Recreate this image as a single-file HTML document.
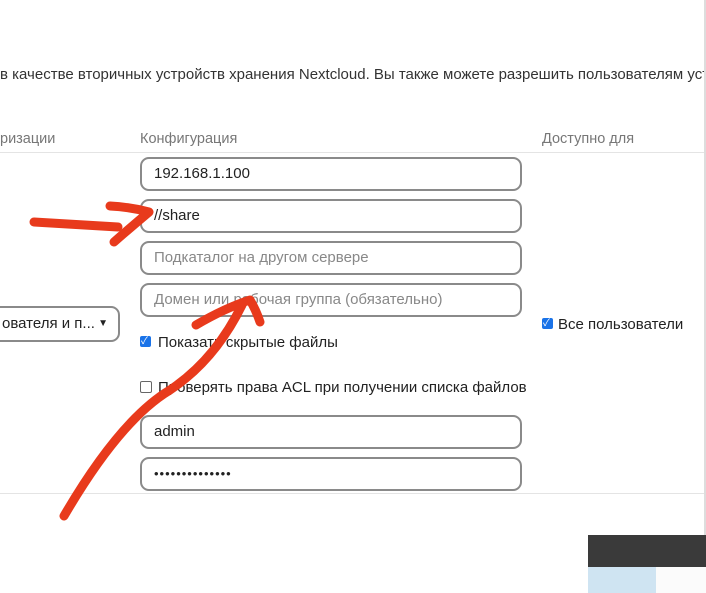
<!DOCTYPE html><html><head><meta charset="utf-8"><style>
body{margin:0;width:706px;height:593px;background:#fff;position:relative;overflow:hidden;font-family:"Liberation Sans","Noto Sans CJK SC",sans-serif;color:#222}
.t{position:absolute;white-space:nowrap}
.in{position:absolute;left:140px;height:30px;border:2px solid #8a8a8a;border-radius:9px;font-size:15px;line-height:30px;padding-left:12px;box-sizing:content-box;width:366px}
.ph{color:#888}
.cb{position:absolute;width:11px;height:11px;border-radius:2px}
</style></head><body>
<div class="t" style="left:0;top:66px;font-size:15px;color:#333">в качестве вторичных устройств хранения Nextcloud. Вы также можете разрешить пользователям уста</div>
<div class="t" style="left:0;top:131px;font-size:14.5px;color:#777">ризации</div>
<div class="t" style="left:140px;top:131px;font-size:14.5px;color:#777">Конфигурация</div>
<div class="t" style="left:542px;top:131px;font-size:14.5px;color:#777">Доступно для</div>
<div style="position:absolute;left:0;top:152px;width:706px;height:1px;background:#e4e4e4"></div>
<div style="position:absolute;left:0;top:493px;width:706px;height:1px;background:#e4e4e4"></div>
<div style="position:absolute;right:0;top:0;width:2px;height:535px;background:#ddd"></div>
<div class="in" style="top:157px">192.168.1.100</div>
<div class="in" style="top:199px">//share</div>
<div class="in ph" style="top:241px">Подкаталог на другом сервере</div>
<div class="in ph" style="top:283px">Домен или рабочая группа (обязательно)</div>
<div class="in" style="top:415px">admin</div>
<div class="in" style="top:457px;font-size:13px;letter-spacing:1px">••••••••••••••</div>
<div style="position:absolute;left:-20px;top:306px;width:140px;height:36px;border:2px solid #8a8a8a;border-radius:9px;font-size:15px;line-height:32px;padding-left:20px;box-sizing:border-box">ователя и п...<span style="position:absolute;right:10px;font-size:10px">▼</span></div>
<div class="cb" style="left:140px;top:336px;background:#1a73e8"></div><div class="t" style="left:141px;top:332px;color:#fff;font-size:10px">✓</div>
<div class="t" style="left:158px;top:334px;font-size:15px">Показать скрытые файлы</div>
<div class="cb" style="left:140px;top:381px;border:1px solid #666;width:10px;height:10px"></div>
<div class="t" style="left:158px;top:379px;font-size:15px">Проверять права ACL при получении списка файлов</div>
<div class="cb" style="left:542px;top:318px;background:#1a73e8"></div><div class="t" style="left:543px;top:314px;color:#fff;font-size:10px">✓</div>
<div class="t" style="left:558px;top:316px;font-size:15px">Все пользователи</div>
<div style="position:absolute;left:588px;top:535px;width:118px;height:32px;background:#3a3a3a"></div>
<div style="position:absolute;left:588px;top:567px;width:68px;height:26px;background:#cfe4f2"></div>
<div style="position:absolute;left:656px;top:567px;width:50px;height:26px;background:#fbfbfb"></div>
<svg style="position:absolute;left:0;top:0" width="706" height="593"><g stroke="#e83a1c" stroke-width="9" fill="none" stroke-linecap="round" stroke-linejoin="round">
<path d="M34 222 L118 227"/><path d="M110 206 Q130 207 149 212 Q130 228 114 242"/>
<path d="M64 516 Q120 420 170 390 Q215 360 242 305"/><path d="M196 325 Q225 308 250 300 Q256 310 260 322"/>
</g></svg>
</body></html>
